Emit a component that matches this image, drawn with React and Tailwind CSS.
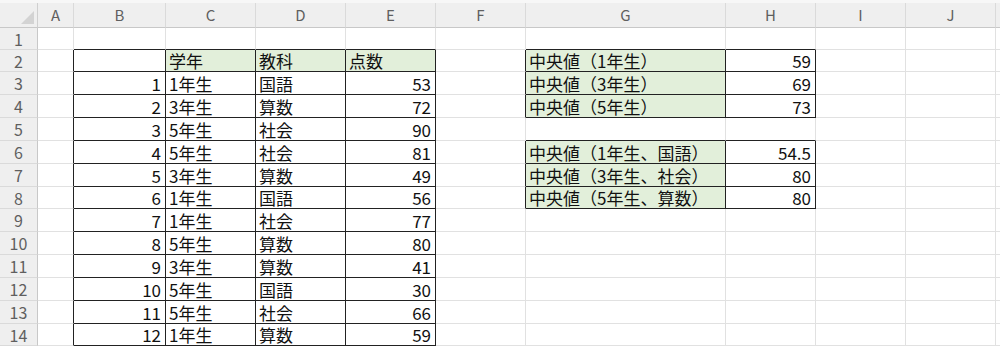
import React from "react"

const font = "font-['Noto_Sans_CJK_JP','Noto_Sans',sans-serif]"

// column widths: row header, A..J, filler
const cols = [
  { key: "", w: "w-[38px]" },
  { key: "A", w: "w-[36px]" },
  { key: "B", w: "w-[92px]" },
  { key: "C", w: "w-[90px]" },
  { key: "D", w: "w-[90px]" },
  { key: "E", w: "w-[90px]" },
  { key: "F", w: "w-[90px]" },
  { key: "G", w: "w-[200px]" },
  { key: "H", w: "w-[90px]" },
  { key: "I", w: "w-[90px]" },
  { key: "J", w: "w-[90px]" },
]

const scores = [
  [1, "1年生", "国語", 53],
  [2, "3年生", "算数", 72],
  [3, "5年生", "社会", 90],
  [4, "5年生", "社会", 81],
  [5, "3年生", "算数", 49],
  [6, "1年生", "国語", 56],
  [7, "1年生", "社会", 77],
  [8, "5年生", "算数", 80],
  [9, "3年生", "算数", 41],
  [10, "5年生", "国語", 30],
  [11, "5年生", "社会", 66],
  [12, "1年生", "算数", 59],
]

const medians = {
  2: ["中央値（1年生）", "59"],
  3: ["中央値（3年生）", "69"],
  4: ["中央値（5年生）", "73"],
  6: ["中央値（1年生、国語）", "54.5"],
  7: ["中央値（3年生、社会）", "80"],
  8: ["中央値（5年生、算数）", "80"],
}

const rowCount = 14

// cell content by row number and column index (1 = A ... 10 = J)
const getCell = (r, c) => {
  if (r === 2) {
    if (c === 3) return { text: "学年" }
    if (c === 4) return { text: "教科" }
    if (c === 5) return { text: "点数" }
  }
  if (r >= 3) {
    const s = scores[r - 3]
    if (s) {
      if (c === 2) return { text: s[0], right: true }
      if (c === 3) return { text: s[1] }
      if (c === 4) return { text: s[2] }
      if (c === 5) return { text: s[3], right: true }
    }
  }
  const m = medians[r]
  if (m) {
    if (c === 7) return { text: m[0] }
    if (c === 8) return { text: m[1], right: true }
  }
  return { text: "" }
}

// the score table continues below the visible rows
const isBoxed = (r, c) => {
  if (c >= 2 && c <= 5 && r >= 2) return true
  if ((c === 7 || c === 8) && medians[r]) return true
  return false
}

const isGreen = (r, c) => {
  if (r === 2 && c >= 3 && c <= 5) return true
  if (c === 7 && medians[r]) return true
  return false
}

const rowHeight = (r) => {
  if (r === 1) return "h-[22px]"
  return r % 6 === 2 ? "h-[22px]" : "h-[23px]"
}

const Corner = () => (
  <div className="w-[38px] h-full shrink-0 bg-[#efefef] border-r border-r-[#cfcfcf] border-b border-b-[#c8c8c8] flex items-end justify-end p-[3px]">
    <svg width="13" height="13" viewBox="0 0 13 13">
      <polygon points="13,0 13,13 0,13" fill="#d3d3d3" />
    </svg>
  </div>
)

export default function App() {
  const rows = []
  for (let r = 1; r <= rowCount; r++) rows.push(r)

  return (
    <div className={`w-[1000px] h-[346px] overflow-hidden bg-white ${font}`}>
      <div className="h-[3px] bg-[#f7f7f7]" />
      {/* column letters */}
      <div className="flex h-[25px]">
        <Corner />
        {cols.slice(1).map((col) => (
          <div
            key={col.key}
            className={`${col.w} shrink-0 h-full bg-[#efefef] border-r border-r-[#dadada] border-b border-b-[#c8c8c8] flex items-center justify-center text-[15px] leading-[20px] text-[#5f5f5f]`}
          >
            {col.key}
          </div>
        ))}
        <div className="flex-1 h-full bg-[#efefef] border-b border-b-[#c8c8c8]" />
      </div>

      {rows.map((r) => (
        <div key={r} className={`flex ${rowHeight(r)}`}>
          <div className="w-[38px] shrink-0 h-full bg-[#efefef] border-r border-r-[#c8c8c8] border-b border-b-[#dadada] flex items-center justify-center text-[16px] leading-[20px] text-[#5f5f5f]">
            {r}
          </div>
          {cols.slice(1).map((col, i) => {
            const c = i + 1
            const cell = getCell(r, c)
            const darkRight = isBoxed(r, c) || isBoxed(r, c + 1)
            const darkBottom = isBoxed(r, c) || isBoxed(r + 1, c)
            return (
              <div
                key={col.key}
                className={`${col.w} shrink-0 h-full border-r border-b flex items-center whitespace-nowrap text-[17px] leading-[21px] text-[#111] ${
                  darkRight ? "border-r-[#222]" : "border-r-[#e1e1e1]"
                } ${darkBottom ? "border-b-[#222]" : "border-b-[#e1e1e1]"} ${
                  isGreen(r, c) ? "bg-[#e2efda]" : "bg-white"
                } ${cell.right ? "justify-end pr-[4px]" : "justify-start pl-[3px]"}`}
              >
                {cell.text}
              </div>
            )
          })}
          <div className="flex-1 h-full border-b border-b-[#e1e1e1]" />
        </div>
      ))}
    </div>
  )
}
